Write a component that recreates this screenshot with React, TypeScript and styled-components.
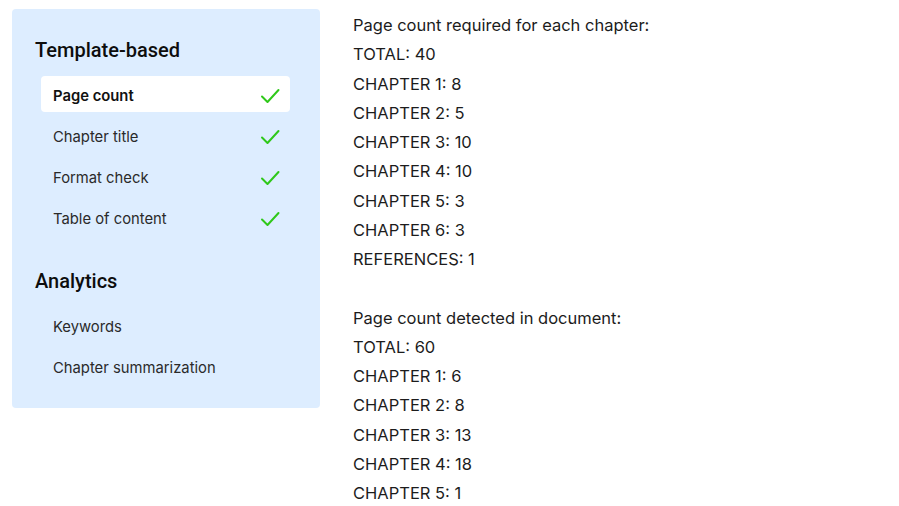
import React from "react";
import styled, { createGlobalStyle } from "styled-components";

const Global = createGlobalStyle`
  html, body { margin: 0; padding: 0; background: #ffffff; }
  body { font-family: Inter, "Noto Sans", sans-serif; color: #1f1f1f; }
`;

const Page = styled.div`
  display: flex;
  align-items: flex-start;
  gap: 33px;
  padding: 9px 0 0 12px;
  width: 899px;
  height: 506px;
  box-sizing: border-box;
  overflow: hidden;
`;

const Sidebar = styled.nav`
  width: 308px;
  height: 399px;
  box-sizing: border-box;
  background: #ddedff;
  border-radius: 4px;
  padding: 27px 30px 0 23px;
  display: flex;
  flex-direction: column;
`;

const SectionTitle = styled.h2<{ $top?: number }>`
  margin: ${(p) => p.$top ?? 0}px 0 12px 0;
  font-family: Roboto, Inter, sans-serif;
  font-weight: 500;
  font-size: 20px;
  line-height: 28px;
  color: #0d0d0d;
`;

const List = styled.ul`
  list-style: none;
  margin: 0;
  padding: 0 0 0 6px;
  display: flex;
  flex-direction: column;
  gap: 5px;
`;

const Item = styled.li<{ $active?: boolean }>`
  height: 36px;
  box-sizing: border-box;
  display: flex;
  align-items: center;
  justify-content: space-between;
  padding: 3px 10px 0 12px;
  border-radius: 4px;
  background: ${(p) => (p.$active ? "#ffffff" : "transparent")};
  font-size: 14.8px;
  font-weight: ${(p) => (p.$active ? 600 : 400)};
  color: ${(p) => (p.$active ? "#111" : "#2a2a2a")};
`;

const Check = styled.svg`
  width: 20px;
  height: 20px;
  flex: none;
`;

const Content = styled.section`
  display: flex;
  flex-direction: column;
  padding-top: 2px;
  font-size: 16.5px;
  color: #1c1c1c;
`;

const Line = styled.div`
  height: 29.25px;
  line-height: 29.25px;
  white-space: nowrap;
`;

const CheckIcon = () => (
  <Check viewBox="0 0 20 20" fill="none">
    <path d="M2 10.5 L7.5 16 L18.5 4" stroke="#2fc81a" strokeWidth="2" strokeLinecap="round" strokeLinejoin="round" />
  </Check>
);

const template = ["Page count", "Chapter title", "Format check", "Table of content"];
const analytics = ["Keywords", "Chapter summarization"];

const lines = [
  "Page count required for each chapter:",
  "TOTAL: 40",
  "CHAPTER 1: 8",
  "CHAPTER 2: 5",
  "CHAPTER 3: 10",
  "CHAPTER 4: 10",
  "CHAPTER 5: 3",
  "CHAPTER 6: 3",
  "REFERENCES: 1",
  "",
  "Page count detected in document:",
  "TOTAL: 60",
  "CHAPTER 1: 6",
  "CHAPTER 2: 8",
  "CHAPTER 3: 13",
  "CHAPTER 4: 18",
  "CHAPTER 5: 1",
];

export default function App() {
  return (
    <>
      <Global />
      <Page>
        <Sidebar>
          <SectionTitle>Template-based</SectionTitle>
          <List>
            {template.map((t, i) => (
              <Item key={t} $active={i === 0}>
                <span>{t}</span>
                <CheckIcon />
              </Item>
            ))}
          </List>
          <SectionTitle $top={32}>Analytics</SectionTitle>
          <List>
            {analytics.map((t) => (
              <Item key={t}>
                <span>{t}</span>
              </Item>
            ))}
          </List>
        </Sidebar>
        <Content>
          {lines.map((l, i) => (
            <Line key={i}>{l || "\u00a0"}</Line>
          ))}
        </Content>
      </Page>
    </>
  );
}
